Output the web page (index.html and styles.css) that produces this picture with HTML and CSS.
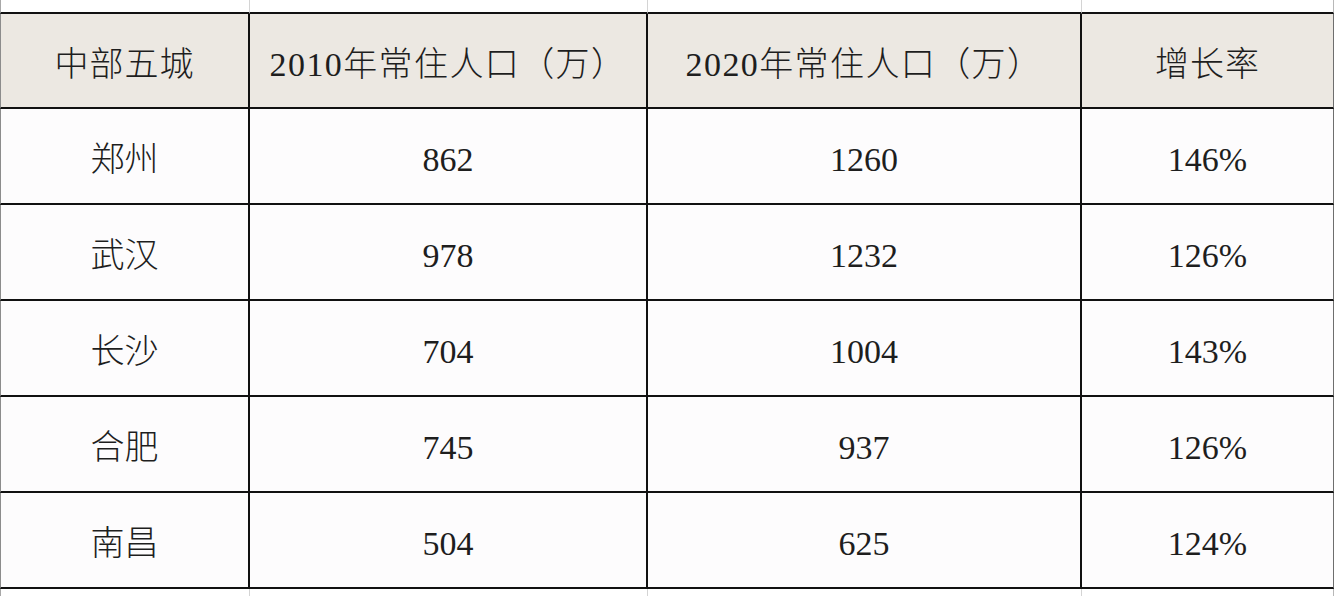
FILE: index.html
```html
<!DOCTYPE html>
<html lang="zh-CN">
<head>
<meta charset="utf-8">
<title>中部五城常住人口</title>
<link rel="stylesheet" href="styles.css">
</head>
<body>
<div class="sheet">
  <div class="cell gap first"></div><div class="cell gap"></div><div class="cell gap"></div><div class="cell gap last"></div>

  <div class="cell head first">中部五城</div>
  <div class="cell head wide">2010年常住人口（万）</div>
  <div class="cell head wide">2020年常住人口（万）</div>
  <div class="cell head last">增长率</div>

  <div class="cell body first">郑州</div><div class="cell body">862</div><div class="cell body">1260</div><div class="cell body last">146%</div>
  <div class="cell body first">武汉</div><div class="cell body">978</div><div class="cell body">1232</div><div class="cell body last">126%</div>
  <div class="cell body first">长沙</div><div class="cell body">704</div><div class="cell body">1004</div><div class="cell body last">143%</div>
  <div class="cell body first">合肥</div><div class="cell body">745</div><div class="cell body">937</div><div class="cell body last">126%</div>
  <div class="cell body first">南昌</div><div class="cell body">504</div><div class="cell body">625</div><div class="cell body last">124%</div>

  <div class="cell gap bottom first"></div><div class="cell gap bottom"></div><div class="cell gap bottom"></div><div class="cell gap bottom last"></div>
</div>
</body>
</html>
```

FILE: styles.css
```css
html, body {
  margin: 0;
  padding: 0;
  background: #ffffff;
}

body {
  width: 1336px;
  height: 596px;
  overflow: hidden;
}

.sheet {
  display: grid;
  grid-template-columns: 250px 398px 434px 252px;
  grid-template-rows: 14px 95px repeat(5, 96px) 7px;
  font-family: "Liberation Serif", "Noto Sans CJK SC", serif;
  font-size: 34px;
  font-weight: 300;
  color: #1e1e1e;
}

.cell {
  box-sizing: border-box;
  display: flex;
  align-items: center;
  justify-content: center;
  line-height: 1;
  border-right: 2px solid #111111;
  border-bottom: 2px solid #111111;
  padding-top: 8px;
}

.gap {
  border-right: 1px solid #d4d4d4;
  border-bottom: 2px solid #111111;
  background: #ffffff;
  padding: 0;
}

.gap.bottom {
  border-bottom: none;
}

.head {
  background: #ece8e2;
  letter-spacing: 1px;
}

.head.wide {
  letter-spacing: 1.4px;
}

.body {
  background: #fdfcfd;
}

.first {
  border-left: 1px solid #8c8c8c;
}

.last {
  border-right: 1px solid #6e6e6e;
}

.gap.first {
  border-left: 1px solid #a8a8a8;
}

.gap.last {
  border-right: 1px solid #b8b8b8;
}
```
